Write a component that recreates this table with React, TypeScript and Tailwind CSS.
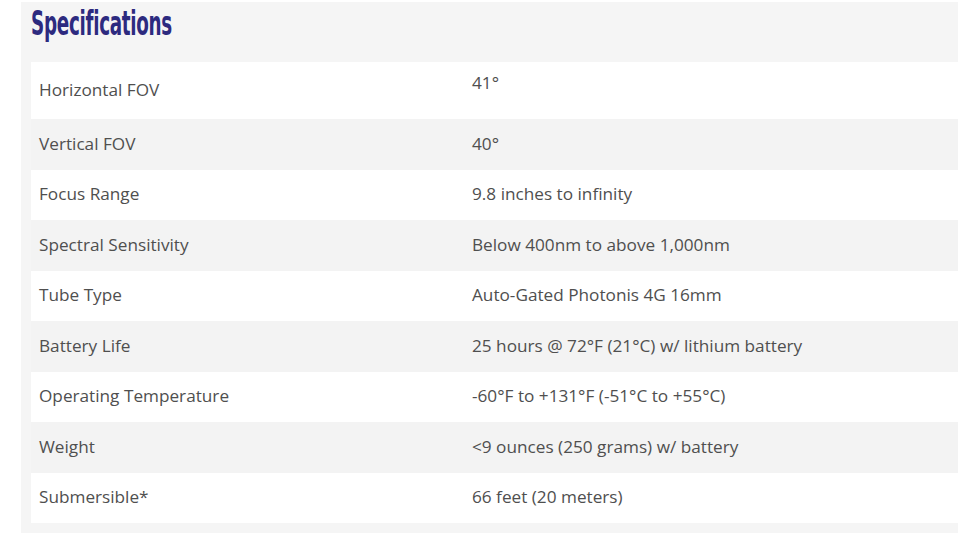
const specs: [string, string][] = [
  ["Horizontal FOV", "41°"],
  ["Vertical FOV", "40°"],
  ["Focus Range", "9.8 inches to infinity"],
  ["Spectral Sensitivity", "Below 400nm to above 1,000nm"],
  ["Tube Type", "Auto-Gated Photonis 4G 16mm"],
  ["Battery Life", "25 hours @ 72°F (21°C) w/ lithium battery"],
  ["Operating Temperature", "-60°F to +131°F (-51°C to +55°C)"],
  ["Weight", "<9 ounces (250 grams) w/ battery"],
  ["Submersible*", "66 feet (20 meters)"],
];

export default function App() {
  return (
    <div className="w-[960px] h-[541px] bg-white pt-[2px] pl-[21px] overflow-hidden">
      <div className="w-[937px] h-[531px] bg-[#f5f5f5] pl-[10px]">
        <h2 className="h-[60px] pt-[2px] text-[#2d2a7f] font-bold text-[34px] leading-[38px] font-['Liberation_Sans_Narrow','DejaVu_Sans_Condensed',sans-serif]">
          <span className="inline-block origin-left scale-x-[0.6] tracking-[-0.5px]">Specifications</span>
        </h2>
        <div className="flex flex-col font-['Open_Sans',sans-serif] text-[17.2px] text-[#4f4f4f]">
          {specs.map(([label, value], i) => (
            <div
              key={label}
              className={
                "flex " +
                (i === 0 ? "h-[57px] " : "h-[50.5px] ") +
                (i % 2 === 0 ? "bg-white" : "bg-[#f3f3f3]")
              }
            >
              <div className="w-[433px] px-2 flex items-center -mt-[1px]">{label}</div>
              <div
                className={
                  "flex-1 px-2 flex " +
                  (i === 0 ? "items-start pt-[8px]" : "items-center -mt-[1px]")
                }
              >
                {value}
              </div>
            </div>
          ))}
        </div>
      </div>
    </div>
  );
}
